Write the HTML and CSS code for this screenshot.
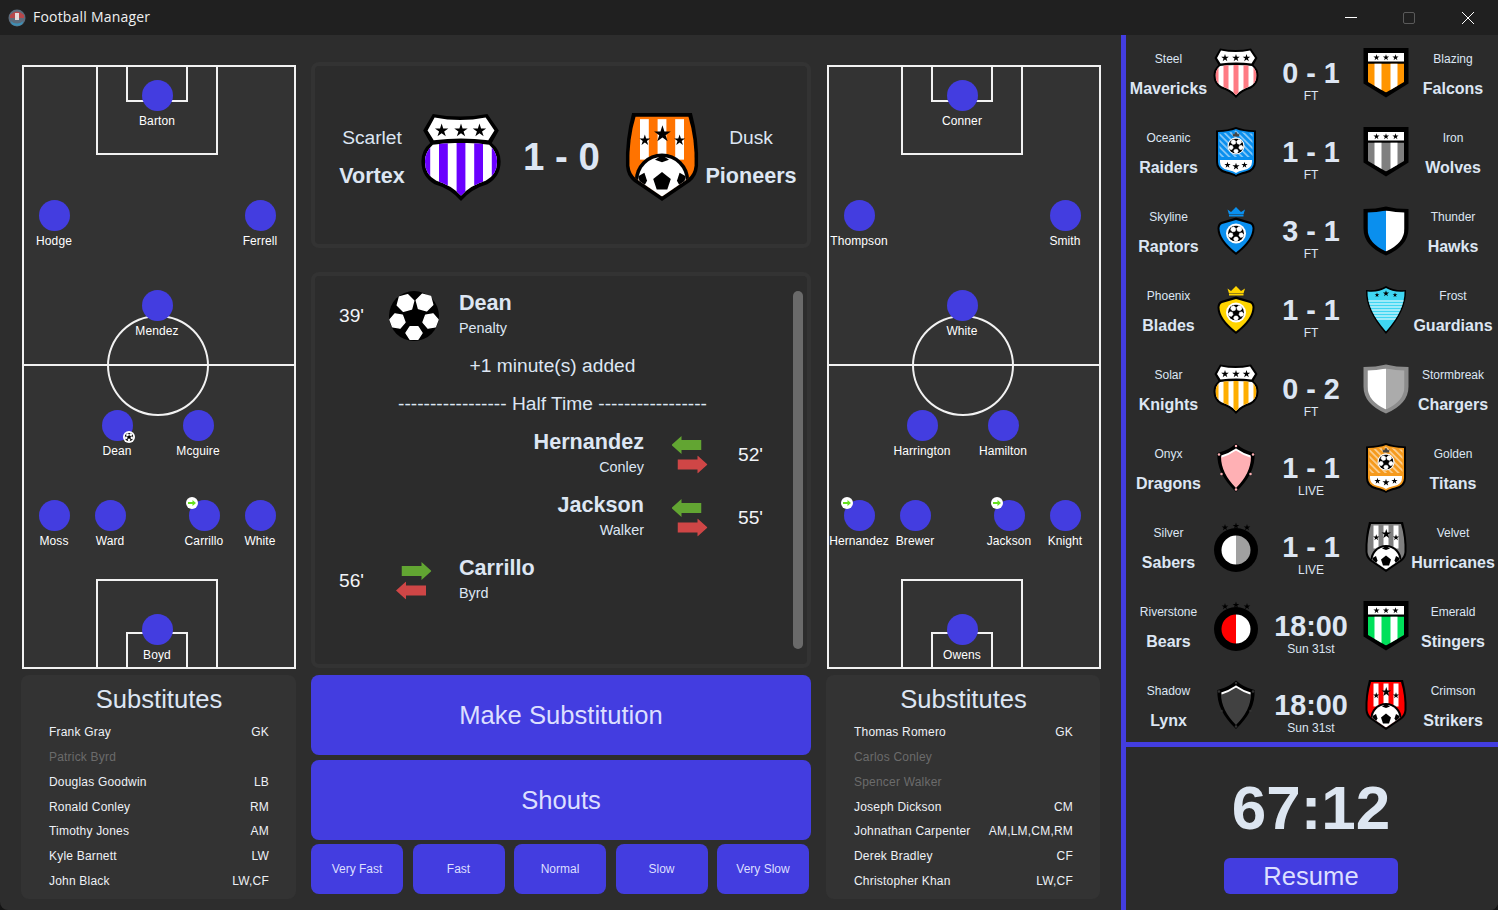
FILE: index.html
```html
<!DOCTYPE html>
<html lang="en">
<head>
    <meta charset="UTF-8">
    <meta name="viewport" content="width=device-width, initial-scale=1.0">
    <title>Football Manager</title>
    <link rel="stylesheet" href="styles.css">
</head>
<body>
    <!-- shared drawings for crests and icons -->
    <svg class="defs" aria-hidden="true">
        <defs>
            <polygon id="star" points="0,-1 .225,-.309 .951,-.309 .363,.118 .588,.809 0,.382 -.588,.809 -.363,.118 -.951,-.309 -.225,-.309"/>
            <polygon id="patch" points="17,0 8.500,14.700 -8.500,14.700 -17,0 -8.500,-14.700 8.500,-14.700" fill="#fff" stroke="#fff" stroke-width="3" stroke-linejoin="round"/>
            <pattern id="hatch" width="9" height="9" patternUnits="userSpaceOnUse" patternTransform="rotate(-45)">
                <rect width="3.500" height="9" fill="#fff" opacity=".5"/>
            </pattern>
            <clipPath id="clip-classic"><path d="M18 36Q50 32 82 36Q91 44 91 55Q91 70 78 77Q61 82 50 94Q39 82 22 77Q9 70 9 55Q9 44 18 36Z"/></clipPath>
            <clipPath id="clip-point"><path d="M14 31H86V68L50 89L14 68Z"/></clipPath>
            <clipPath id="clip-ball"><path d="M20 4H80Q88 30 87 60Q86 70 79 75L50 95L21 75Q14 70 13 60Q12 30 20 4Z"/></clipPath>
            <clipPath id="clip-half"><path d="M50 9Q70 13 87 13V45Q87 74 50 91Q13 74 13 45V13Q30 13 50 9Z"/></clipPath>
            <clipPath id="clip-frost"><path d="M13 13Q36 15 50 6Q64 15 87 13Q88 50 50 93Q12 50 13 13Z"/></clipPath>
            <clipPath id="clip-ring"><circle cx="50" cy="56" r="29"/></clipPath>
        </defs>

        <symbol id="ball" viewBox="0 0 100 100">
            <circle cx="50" cy="50" r="50" fill="#000"/>
            <use href="#patch" transform="translate(33 24) rotate(-15)"/>
            <use href="#patch" transform="translate(71 23) rotate(15)"/>
            <use href="#patch" transform="translate(17 60) rotate(70) scale(.9)"/>
            <use href="#patch" transform="translate(83 60) rotate(-70) scale(.9)"/>
            <use href="#patch" transform="translate(50 84) scale(.95 .85)"/>
        </symbol>

        <symbol id="arrow" viewBox="0 0 30 18">
            <path d="M0 4H20V0L30 9L20 18V14H0Z"/>
        </symbol>

        <symbol id="crest-classic" viewBox="0 0 100 100">
            <path d="M18 1Q49 7 80 1L93 20L85 34Q95 42 95 55Q95 72 80 81Q62 86 50 100Q38 86 20 81Q5 72 5 55Q5 42 15 34L7 20Z"/>
            <path fill="#fff" d="M20 5Q49 11 78 5L88 20L81 31Q50 27 19 31L12 20Z"/>
            <g clip-path="url(#clip-classic)">
                <rect width="100" height="100" fill="#fff"/>
                <rect class="team" x="5" width="10" height="100"/>
                <rect class="team" x="25" width="10" height="100"/>
                <rect class="team" x="45" width="10" height="100"/>
                <rect class="team" x="65" width="10" height="100"/>
                <rect class="team" x="85" width="10" height="100"/>
            </g>
            <use href="#star" transform="translate(28 20) scale(8)"/>
            <use href="#star" transform="translate(50 20) scale(8)"/>
            <use href="#star" transform="translate(71 20) scale(8)"/>
        </symbol>

        <symbol id="crest-point" viewBox="0 0 100 100">
            <path d="M5 0H95V71L50 99L5 71Z"/>
            <rect x="14" y="10" width="72" height="17" fill="#fff"/>
            <g clip-path="url(#clip-point)">
                <rect class="team" width="100" height="100"/>
                <rect x="27" width="14" height="100" fill="#fff"/>
                <rect x="59" width="14" height="100" fill="#fff"/>
            </g>
            <use href="#star" transform="translate(31 19) scale(6.500)"/>
            <use href="#star" transform="translate(50 19) scale(6.500)"/>
            <use href="#star" transform="translate(69 19) scale(6.500)"/>
        </symbol>

        <symbol id="crest-ball" viewBox="0 0 100 100">
            <path d="M16 0H84Q92 30 91 60Q90 72 82 78L50 100L18 78Q10 72 9 60Q8 30 16 0Z"/>
            <g clip-path="url(#clip-ball)">
                <rect class="team" width="100" height="100"/>
                <rect x="25" y="7" width="10" height="46" fill="#fff"/>
                <rect x="45" y="7" width="10" height="46" fill="#fff"/>
                <rect x="65" y="7" width="10" height="46" fill="#fff"/>
                <circle cx="50" cy="77" r="31"/>
                <circle cx="50" cy="77" r="27" fill="#fff"/>
                <path d="M50 48L58 53L50 56L42 53Z"/>
                <path d="M23 72L30 68L33 77L27 88Z"/>
                <path d="M77 72L70 68L67 77L73 88Z"/>
                <polygon points="50,67 60,75 56,87 44,87 40,75"/>
            </g>
            <use href="#star" transform="translate(50.500 24) scale(10)"/>
            <use href="#star" transform="translate(30.500 31) scale(6.500)"/>
            <use href="#star" transform="translate(70 31) scale(6.500)"/>
        </symbol>

        <symbol id="crest-badge" viewBox="0 0 100 100">
            <path d="M10 7Q35 6 50 0Q65 6 90 7V70Q90 88 70 93Q55 96 50 100Q45 96 30 93Q10 88 10 70Z"/>
            <path class="team" d="M14 10Q37 9 50 4Q63 9 86 10V70Q86 85 68 89Q55 92 50 96Q45 92 32 89Q14 85 14 70Z"/>
            <path fill="url(#hatch)" d="M17 13Q37 12 50 7Q63 12 83 13V60H17Z"/>
            <path fill="#fff" d="M18 66H82V70Q82 83 66 86Q55 88 50 92Q45 88 34 86Q18 83 18 70Z"/>
            <circle cx="50" cy="38" r="17" fill="#fff"/>
            <use href="#ball" x="35" y="23" width="30" height="30"/>
            <path fill="#444" d="M43 12L46 15L50 9L54 15L57 12L56 19H44Z"/>
            <use href="#star" transform="translate(33 76) scale(6.500)"/>
            <use href="#star" transform="translate(50 79) scale(7.500)"/>
            <use href="#star" transform="translate(67 76) scale(6.500)"/>
        </symbol>

        <symbol id="crest-crown" viewBox="0 0 100 100">
            <path class="team" d="M33 7L40 12L50 2L60 12L68 7L65 17H36Z"/>
            <rect class="team" x="36" y="18" width="29" height="3"/>
            <path d="M50 23L80 32Q87 35 87 45Q87 70 50 98Q13 70 13 45Q13 35 20 32Z"/>
            <path class="team" d="M50 28L78 36Q83 38 83 45Q83 67 50 93Q17 67 17 45Q17 38 22 36Z"/>
            <circle cx="50" cy="55" r="20" fill="#fff"/>
            <use href="#ball" x="34" y="39" width="32" height="32"/>
        </symbol>

        <symbol id="crest-half" viewBox="0 0 100 100">
            <path class="edge" d="M50 1Q70 6 95 6V45Q95 80 50 99Q5 80 5 45V6Q30 6 50 1Z"/>
            <g clip-path="url(#clip-half)">
                <rect class="left" width="50" height="100"/>
                <rect class="right" x="50" width="50" height="100"/>
            </g>
        </symbol>

        <symbol id="crest-frost" viewBox="0 0 100 100">
            <path d="M10 10Q35 12 50 2Q65 12 90 10Q92 50 50 98Q8 50 10 10Z"/>
            <g clip-path="url(#clip-frost)">
                <rect class="team" width="100" height="100"/>
                <rect y="31" width="100" height="2" fill="#fff"/>
                <rect y="37" width="100" height="2" fill="#fff"/>
                <rect y="43" width="100" height="2" fill="#fff"/>
                <rect y="49" width="100" height="2" fill="#fff"/>
                <rect y="55" width="100" height="2" fill="#fff"/>
                <rect y="61" width="100" height="2" fill="#fff"/>
                <rect y="67" width="100" height="2" fill="#fff"/>
            </g>
            <use href="#star" transform="translate(32 20) scale(5)"/>
            <use href="#star" transform="translate(50 17) scale(6.500)"/>
            <use href="#star" transform="translate(68 20) scale(5)"/>
        </symbol>

        <symbol id="crest-stud" viewBox="0 0 100 100">
            <path d="M50 1Q65 15 87 20Q90 60 50 98Q10 60 13 20Q35 15 50 1Z"/>
            <path class="team" d="M50 13Q66 24 80 27Q80 60 50 90Q20 60 20 27Q34 24 50 13Z"/>
            <path fill="none" stroke="#fff" stroke-width="4" d="M21 27Q35 23 50 13Q65 23 79 27"/>
            <circle class="stud" cx="50" cy="6" r="2.500"/>
            <circle class="stud" cx="16" cy="23" r="2.500"/>
            <circle class="stud" cx="84" cy="23" r="2.500"/>
            <circle class="stud" cx="21" cy="62" r="2.500"/>
            <circle class="stud" cx="79" cy="62" r="2.500"/>
            <circle class="stud" cx="50" cy="93" r="2.500"/>
        </symbol>

        <symbol id="crest-ring" viewBox="0 0 100 100">
            <use href="#star" transform="translate(28 11) scale(7)"/>
            <use href="#star" transform="translate(50 8) scale(7)"/>
            <use href="#star" transform="translate(72 11) scale(7)"/>
            <circle cx="50" cy="56" r="44"/>
            <g clip-path="url(#clip-ring)">
                <rect class="left" width="50" height="100"/>
                <rect class="right" x="50" width="50" height="100"/>
            </g>
        </symbol>
    </svg>

    <div class="window">
        <header class="titlebar">
            <svg class="app-icon" viewBox="0 0 18 18">
                <circle cx="9" cy="9" r="8.500" fill="#5d6c7c"/>
                <path d="M2 6Q9 -1 16 6V9H2Z" fill="#b8474a"/>
                <path d="M2.500 12Q9 17 15.500 12L14 15.500Q9 18 4 15.500Z" fill="#3d8fb5"/>
                <rect x="7" y="4" width="4" height="7" fill="#e6d9d9"/>
            </svg>
            <span class="app-name">Football Manager</span>
            <div class="window-buttons">
                <span class="window-button"><svg width="12" height="12" viewBox="0 0 12 12"><path d="M0 5.500H12" stroke="#fff"/></svg></span>
                <span class="window-button"><svg width="12" height="12" viewBox="0 0 12 12"><rect x=".5" y=".5" width="11" height="11" rx="1.500" fill="none" stroke="#5a5a5a"/></svg></span>
                <span class="window-button"><svg width="12" height="12" viewBox="0 0 12 12"><path d="M0 0L12 12M12 0L0 12" stroke="#fff"/></svg></span>
            </div>
        </header>

        <div class="content">
            <main class="match">
                <!-- home team -->
                <section class="team-column">
                    <div class="pitch">
                        <div class="box big-box top"></div>
                        <div class="box small-box top"></div>
                        <div class="halfway"></div>
                        <div class="centre-circle"></div>
                        <div class="box big-box bottom"></div>
                        <div class="box small-box bottom"></div>

                        <div class="player" style="left:93px;top:13px"><span class="dot"></span><span class="player-name">Barton</span></div>
                        <div class="player" style="left:-10px;top:133px"><span class="dot"></span><span class="player-name">Hodge</span></div>
                        <div class="player" style="left:196px;top:133px"><span class="dot"></span><span class="player-name">Ferrell</span></div>
                        <div class="player" style="left:93px;top:223px"><span class="dot"></span><span class="player-name">Mendez</span></div>
                        <div class="player" style="left:53px;top:343px"><span class="dot"><svg class="mark goal-mark" viewBox="0 0 100 100"><circle cx="50" cy="50" r="50" fill="#fff"/><use href="#ball" x="14" y="14" width="72" height="72"/></svg></span><span class="player-name">Dean</span></div>
                        <div class="player" style="left:134px;top:343px"><span class="dot"></span><span class="player-name">Mcguire</span></div>
                        <div class="player" style="left:-10px;top:433px"><span class="dot"></span><span class="player-name">Moss</span></div>
                        <div class="player" style="left:46px;top:433px"><span class="dot"></span><span class="player-name">Ward</span></div>
                        <div class="player" style="left:140px;top:433px"><span class="dot"><svg class="mark sub-mark" viewBox="0 0 12 12"><circle cx="6" cy="6" r="6" fill="#fff"/><path d="M2 5H6.500V3L10 6L6.500 9V7H2Z" fill="#66e01f"/></svg></span><span class="player-name">Carrillo</span></div>
                        <div class="player" style="left:196px;top:433px"><span class="dot"></span><span class="player-name">White</span></div>
                        <div class="player" style="left:93px;top:547px"><span class="dot"></span><span class="player-name">Boyd</span></div>
                    </div>
                    <div class="subs">
                        <h2>Substitutes</h2>
                        <div class="sub-row"><span>Frank Gray</span><span>GK</span></div>
                        <div class="sub-row used"><span>Patrick Byrd</span></div>
                        <div class="sub-row"><span>Douglas Goodwin</span><span>LB</span></div>
                        <div class="sub-row"><span>Ronald Conley</span><span>RM</span></div>
                        <div class="sub-row"><span>Timothy Jones</span><span>AM</span></div>
                        <div class="sub-row"><span>Kyle Barnett</span><span>LW</span></div>
                        <div class="sub-row"><span>John Black</span><span>LW,CF</span></div>
                    </div>
                </section>

                <!-- score, events and controls -->
                <section class="centre-column">
                    <div class="panel scoreboard">
                        <div class="team-name"><span>Scarlet</span><strong>Vortex</strong></div>
                        <svg class="crest-large c-violet"><use href="#crest-classic"/></svg>
                        <div class="big-score">1 - 0</div>
                        <svg class="crest-large c-orange"><use href="#crest-ball"/></svg>
                        <div class="team-name"><span>Dusk</span><strong>Pioneers</strong></div>
                    </div>

                    <div class="panel events">
                        <div class="event-list">
                            <div class="event home">
                                <span class="minute">39'</span>
                                <svg class="event-ball"><use href="#ball"/></svg>
                                <div class="event-text"><strong>Dean</strong><span>Penalty</span></div>
                            </div>
                            <div class="event-note">+1 minute(s) added</div>
                            <div class="event-note">----------------- Half Time -----------------</div>
                            <div class="event away">
                                <div class="event-text"><strong>Hernandez</strong><span>Conley</span></div>
                                <svg class="swap" viewBox="0 0 36 38">
                                    <use class="arrow-in" href="#arrow" width="30" height="18" transform="matrix(-1 0 0 1 29.500 0)"/>
                                    <use class="arrow-out" href="#arrow" x="5.500" y="19.500" width="30" height="18"/>
                                </svg>
                                <span class="minute">52'</span>
                            </div>
                            <div class="event away">
                                <div class="event-text"><strong>Jackson</strong><span>Walker</span></div>
                                <svg class="swap" viewBox="0 0 36 38">
                                    <use class="arrow-in" href="#arrow" width="30" height="18" transform="matrix(-1 0 0 1 29.500 0)"/>
                                    <use class="arrow-out" href="#arrow" x="5.500" y="19.500" width="30" height="18"/>
                                </svg>
                                <span class="minute">55'</span>
                            </div>
                            <div class="event home">
                                <span class="minute">56'</span>
                                <svg class="swap" viewBox="0 0 36 38">
                                    <use class="arrow-in" href="#arrow" x="5.500" width="30" height="18"/>
                                    <use class="arrow-out" href="#arrow" width="30" height="18" transform="matrix(-1 0 0 1 30 19.500)"/>
                                </svg>
                                <div class="event-text"><strong>Carrillo</strong><span>Byrd</span></div>
                            </div>
                        </div>
                        <div class="scrollbar"></div>
                    </div>

                    <button class="big-button first">Make Substitution</button>
                    <button class="big-button">Shouts</button>
                    <div class="speeds">
                        <button>Very Fast</button>
                        <button>Fast</button>
                        <button>Normal</button>
                        <button>Slow</button>
                        <button>Very Slow</button>
                    </div>
                </section>

                <!-- away team -->
                <section class="team-column away-column">
                    <div class="pitch">
                        <div class="box big-box top"></div>
                        <div class="box small-box top"></div>
                        <div class="halfway"></div>
                        <div class="centre-circle"></div>
                        <div class="box big-box bottom"></div>
                        <div class="box small-box bottom"></div>

                        <div class="player" style="left:93px;top:13px"><span class="dot"></span><span class="player-name">Conner</span></div>
                        <div class="player" style="left:-10px;top:133px"><span class="dot"></span><span class="player-name">Thompson</span></div>
                        <div class="player" style="left:196px;top:133px"><span class="dot"></span><span class="player-name">Smith</span></div>
                        <div class="player" style="left:93px;top:223px"><span class="dot"></span><span class="player-name">White</span></div>
                        <div class="player" style="left:53px;top:343px"><span class="dot"></span><span class="player-name">Harrington</span></div>
                        <div class="player" style="left:134px;top:343px"><span class="dot"></span><span class="player-name">Hamilton</span></div>
                        <div class="player" style="left:-10px;top:433px"><span class="dot"><svg class="mark sub-mark" viewBox="0 0 12 12"><circle cx="6" cy="6" r="6" fill="#fff"/><path d="M2 5H6.500V3L10 6L6.500 9V7H2Z" fill="#66e01f"/></svg></span><span class="player-name">Hernandez</span></div>
                        <div class="player" style="left:46px;top:433px"><span class="dot"></span><span class="player-name">Brewer</span></div>
                        <div class="player" style="left:140px;top:433px"><span class="dot"><svg class="mark sub-mark" viewBox="0 0 12 12"><circle cx="6" cy="6" r="6" fill="#fff"/><path d="M2 5H6.500V3L10 6L6.500 9V7H2Z" fill="#66e01f"/></svg></span><span class="player-name">Jackson</span></div>
                        <div class="player" style="left:196px;top:433px"><span class="dot"></span><span class="player-name">Knight</span></div>
                        <div class="player" style="left:93px;top:547px"><span class="dot"></span><span class="player-name">Owens</span></div>
                    </div>
                    <div class="subs">
                        <h2>Substitutes</h2>
                        <div class="sub-row"><span>Thomas Romero</span><span>GK</span></div>
                        <div class="sub-row used"><span>Carlos Conley</span></div>
                        <div class="sub-row used"><span>Spencer Walker</span></div>
                        <div class="sub-row"><span>Joseph Dickson</span><span>CM</span></div>
                        <div class="sub-row"><span>Johnathan Carpenter</span><span>AM,LM,CM,RM</span></div>
                        <div class="sub-row"><span>Derek Bradley</span><span>CF</span></div>
                        <div class="sub-row"><span>Christopher Khan</span><span>LW,CF</span></div>
                    </div>
                </section>
            </main>

            <aside class="sidebar">
                <div class="fixtures">
                    <div class="fixture">
                        <div class="club"><span>Steel</span><strong>Mavericks</strong></div>
                        <svg class="crest c-pink"><use href="#crest-classic"/></svg>
                        <div class="result"><b>0 - 1</b><span>FT</span></div>
                        <svg class="crest c-amber"><use href="#crest-point"/></svg>
                        <div class="club"><span>Blazing</span><strong>Falcons</strong></div>
                    </div>
                    <div class="fixture">
                        <div class="club"><span>Oceanic</span><strong>Raiders</strong></div>
                        <svg class="crest c-blue"><use href="#crest-badge"/></svg>
                        <div class="result"><b>1 - 1</b><span>FT</span></div>
                        <svg class="crest c-grey"><use href="#crest-point"/></svg>
                        <div class="club"><span>Iron</span><strong>Wolves</strong></div>
                    </div>
                    <div class="fixture">
                        <div class="club"><span>Skyline</span><strong>Raptors</strong></div>
                        <svg class="crest c-blue"><use href="#crest-crown"/></svg>
                        <div class="result"><b>3 - 1</b><span>FT</span></div>
                        <svg class="crest c-thunder"><use href="#crest-half"/></svg>
                        <div class="club"><span>Thunder</span><strong>Hawks</strong></div>
                    </div>
                    <div class="fixture">
                        <div class="club"><span>Phoenix</span><strong>Blades</strong></div>
                        <svg class="crest c-yellow"><use href="#crest-crown"/></svg>
                        <div class="result"><b>1 - 1</b><span>FT</span></div>
                        <svg class="crest c-ice"><use href="#crest-frost"/></svg>
                        <div class="club"><span>Frost</span><strong>Guardians</strong></div>
                    </div>
                    <div class="fixture">
                        <div class="club"><span>Solar</span><strong>Knights</strong></div>
                        <svg class="crest c-gold"><use href="#crest-classic"/></svg>
                        <div class="result"><b>0 - 2</b><span>FT</span></div>
                        <svg class="crest c-storm"><use href="#crest-half"/></svg>
                        <div class="club"><span>Stormbreak</span><strong>Chargers</strong></div>
                    </div>
                    <div class="fixture">
                        <div class="club"><span>Onyx</span><strong>Dragons</strong></div>
                        <svg class="crest c-rose"><use href="#crest-stud"/></svg>
                        <div class="result"><b>1 - 1</b><span>LIVE</span></div>
                        <svg class="crest c-tan"><use href="#crest-badge"/></svg>
                        <div class="club"><span>Golden</span><strong>Titans</strong></div>
                    </div>
                    <div class="fixture">
                        <div class="club"><span>Silver</span><strong>Sabers</strong></div>
                        <svg class="crest c-silver"><use href="#crest-ring"/></svg>
                        <div class="result"><b>1 - 1</b><span>LIVE</span></div>
                        <svg class="crest c-grey"><use href="#crest-ball"/></svg>
                        <div class="club"><span>Velvet</span><strong>Hurricanes</strong></div>
                    </div>
                    <div class="fixture">
                        <div class="club"><span>Riverstone</span><strong>Bears</strong></div>
                        <svg class="crest c-scarlet"><use href="#crest-ring"/></svg>
                        <div class="result"><b>18:00</b><span>Sun 31st</span></div>
                        <svg class="crest c-green"><use href="#crest-point"/></svg>
                        <div class="club"><span>Emerald</span><strong>Stingers</strong></div>
                    </div>
                    <div class="fixture">
                        <div class="club"><span>Shadow</span><strong>Lynx</strong></div>
                        <svg class="crest c-dark"><use href="#crest-stud"/></svg>
                        <div class="result"><b>18:00</b><span>Sun 31st</span></div>
                        <svg class="crest c-red"><use href="#crest-ball"/></svg>
                        <div class="club"><span>Crimson</span><strong>Strikers</strong></div>
                    </div>
                </div>
                <div class="clock">
                    <div class="time">67:12</div>
                    <button class="resume">Resume</button>
                </div>
            </aside>
        </div>
    </div>
</body>
</html>
```

FILE: styles.css
```css
/* page */
html, body {
    margin: 0;
    height: 100%;
}
body {
    background: #141414;
    font-family: "Liberation Sans", Arial, sans-serif;
    color: #dde6f3;
    overflow: hidden;
}
.defs {
    position: absolute;
    width: 0;
    height: 0;
}
.window {
    height: 910px;
    background: #2d2d2d;
    border-radius: 0 0 8px 8px;
    overflow: hidden;
}

/* title bar */
.titlebar {
    height: 35px;
    background: #202020;
    display: flex;
    align-items: center;
    padding-left: 8px;
}
.app-icon {
    width: 18px;
    height: 18px;
}
.app-name {
    margin-left: 7px;
    padding-bottom: 2px;
    font-family: "Open Sans", sans-serif;
    font-size: 14px;
    letter-spacing: .2px;
    color: #f0f0f0;
}
.window-buttons {
    margin-left: auto;
    margin-right: 1px;
    display: flex;
}
.window-button {
    width: 58.5px;
    height: 32px;
    display: flex;
    align-items: center;
    justify-content: center;
}

.content {
    display: flex;
    height: 875px;
}

/* three columns */
.match {
    width: 1121px;
    flex: none;
    display: grid;
    grid-template-columns: 274px 500px 274px;
    column-gap: 15px;
    padding-left: 22px;
    box-sizing: border-box;
    align-content: start;
}
.team-column {
    padding-top: 30px;
}
.away-column {
    margin-left: 1px;
}

/* pitch */
.pitch {
    position: relative;
    width: 274px;
    height: 604px;
    box-sizing: border-box;
    border: 2px solid #f2f2f2;
    background: #333333;
}
.box {
    position: absolute;
    box-sizing: border-box;
    border: 2px solid #f2f2f2;
}
.big-box {
    left: 72px;
    width: 122px;
    height: 90px;
}
.small-box {
    left: 102px;
    width: 62px;
    height: 37px;
}
.box.top {
    top: -2px;
}
.box.bottom {
    bottom: -2px;
}
.halfway {
    position: absolute;
    left: 0;
    right: 0;
    top: 297px;
    height: 2px;
    background: #f2f2f2;
}
.centre-circle {
    position: absolute;
    left: 83px;
    top: 248px;
    width: 102px;
    height: 101px;
    box-sizing: border-box;
    border: 2px solid #f2f2f2;
    border-radius: 50%;
}
.player {
    position: absolute;
    width: 80px;
    display: flex;
    flex-direction: column;
    align-items: center;
}
.dot {
    position: relative;
    width: 31px;
    height: 31px;
    border-radius: 50%;
    background: #433de0;
}
.player-name {
    margin-top: 3px;
    font-size: 12px;
    line-height: 14px;
    letter-spacing: .1px;
    color: #fff;
    white-space: nowrap;
}
.mark {
    position: absolute;
    width: 12px;
    height: 12px;
}
.goal-mark {
    left: 21px;
    top: 21px;
}
.sub-mark {
    left: -3px;
    top: -3px;
}

/* substitutes */
.subs {
    margin: 6px 0 0 -1px;
    height: 224px;
    box-sizing: border-box;
    padding: 0 27px 0 28px;
    background: #333333;
    border-radius: 8px;
}
.subs h2 {
    margin: 0;
    padding-top: 9px;
    height: 45px;
    box-sizing: border-box;
    font-size: 25.600px;
    line-height: 30px;
    font-weight: normal;
    text-align: center;
}
.sub-row {
    display: flex;
    justify-content: space-between;
    height: 24.860px;
    line-height: 24.860px;
    font-size: 12px;
    letter-spacing: .2px;
    color: #eef1f6;
}
.sub-row.used {
    color: #6b6b6b;
}

/* centre column */
.centre-column {
    padding-top: 27px;
}
.panel {
    box-sizing: border-box;
    border: 4px solid #333333;
    border-radius: 8px;
    background: #2c2c2c;
}
.scoreboard {
    height: 186px;
    display: grid;
    grid-template-columns: 90px 88px 113px 88px 90px;
    align-items: center;
    padding: 4px 0 0 12px;
}
.team-name {
    display: flex;
    flex-direction: column;
    align-items: center;
    gap: 14px;
    margin-top: 2px;
    white-space: nowrap;
}
.team-name span {
    font-size: 19.200px;
    line-height: 22px;
}
.team-name strong {
    font-size: 21.600px;
    line-height: 26px;
}
.crest-large {
    width: 88px;
    height: 88px;
}
.big-score {
    font-size: 38.400px;
    font-weight: bold;
    text-align: center;
    white-space: nowrap;
}

/* match events */
.events {
    height: 396px;
    margin-top: 24px;
    display: flex;
}
.event-list {
    width: 449px;
    margin-left: 24px;
    padding-top: 8px;
}
.event {
    height: 63px;
    display: grid;
    align-items: center;
}
.event.home {
    grid-template-columns: 50px 50px 1fr;
}
.event.home .event-text {
    margin-left: 20px;
}
.event.home .swap {
    justify-self: center;
}
.event.away {
    grid-template-columns: 1fr 73px 50px;
}
.event.away .event-text {
    margin-right: 21px;
    text-align: right;
}
.event.away .swap {
    justify-self: start;
    margin-left: 7px;
}
.minute {
    font-size: 19.200px;
    color: #f2f4f8;
    white-space: nowrap;
}
.event-ball {
    width: 50px;
    height: 50px;
}
.swap {
    width: 36px;
    height: 38px;
}
.arrow-in {
    fill: #62a532;
}
.arrow-out {
    fill: #cf4646;
}
.event-text {
    padding-bottom: 5px;
}
.event-text strong {
    display: block;
    font-size: 21.600px;
    line-height: 26px;
}
.event-text span {
    display: block;
    margin-top: 3px;
    font-size: 14.400px;
    line-height: 18px;
}
.event-note {
    height: 38px;
    line-height: 38px;
    padding-right: 22px;
    font-size: 19.200px;
    text-align: center;
    white-space: nowrap;
}
.scrollbar {
    width: 10px;
    margin: 15px 0 15px 5px;
    border-radius: 5px;
    background: #6a6a6a;
}

/* buttons */
button {
    border: none;
    background: #433de0;
    color: #dcdfff;
    font-family: "Liberation Sans", Arial, sans-serif;
    border-radius: 8px;
    padding: 0;
}
.big-button {
    display: block;
    width: 500px;
    height: 80px;
    margin-top: 5px;
    font-size: 25.600px;
}
.big-button.first {
    margin-top: 7px;
}
.speeds {
    width: 498px;
    margin-top: 4px;
    display: grid;
    grid-template-columns: repeat(5, 92px);
    column-gap: 9.500px;
}
.speeds button {
    height: 50px;
    font-size: 12px;
}

/* other results */
.sidebar {
    width: 377px;
    flex: none;
    box-sizing: border-box;
    border-left: 5px solid #433de0;
    background: #2b2b2b;
}
.fixtures {
    height: 707px;
    overflow: hidden;
    border-bottom: 5px solid #433de0;
}
.fixture {
    height: 79px;
    display: grid;
    grid-template-columns: 85px 50px 100px 50px 84px;
    align-items: center;
}
.club {
    display: flex;
    flex-direction: column;
    align-items: center;
    gap: 14px;
    padding-top: 1px;
    white-space: nowrap;
}
.club span {
    font-size: 12px;
    line-height: 14px;
}
.club strong {
    font-size: 16px;
    line-height: 18px;
}
.crest {
    width: 50px;
    height: 50px;
    margin-bottom: 3px;
}
.result {
    align-self: start;
    padding-top: 22px;
    text-align: center;
    white-space: nowrap;
}
.result b {
    display: block;
    font-size: 28.800px;
    line-height: 32px;
}
.result span {
    display: block;
    font-size: 12px;
    line-height: 14px;
}

/* crest colours */
.team { fill: var(--team); }
.edge { fill: var(--edge, #000); }
.left { fill: var(--left); }
.right { fill: var(--right); }
.stud { fill: var(--stud); }
.c-violet { --team: #6a00ff; }
.c-orange { --team: #ff7300; }
.c-pink { --team: #ff7b84; }
.c-amber { --team: #ff9500; }
.c-blue { --team: #0a8fee; }
.c-grey { --team: #7f7f7f; }
.c-yellow { --team: #ffd400; }
.c-ice { --team: #3fd6f2; }
.c-gold { --team: #ffae00; }
.c-tan { --team: #f59a1d; }
.c-green { --team: #00e05a; }
.c-red { --team: #ff0000; }
.c-rose { --team: #ffb0b4; --stud: #ffb0b4; }
.c-dark { --team: #414141; --stud: #333333; }
.c-thunder { --left: #0a8fee; --right: #ffffff; }
.c-storm { --edge: #8c8c8c; --left: #ffffff; --right: #ababab; }
.c-silver { --left: #ffffff; --right: #a0a0a0; }
.c-scarlet { --left: #ff0000; --right: #ffffff; }

/* clock */
.clock {
    display: flex;
    flex-direction: column;
    align-items: center;
    padding: 22px 2px 0 0;
}
.time {
    font-size: 62px;
    line-height: 78px;
    font-weight: bold;
    color: #dde6f1;
}
.resume {
    width: 174px;
    height: 36px;
    margin-top: 11px;
    border-radius: 6px;
    font-size: 25.600px;
}
```
